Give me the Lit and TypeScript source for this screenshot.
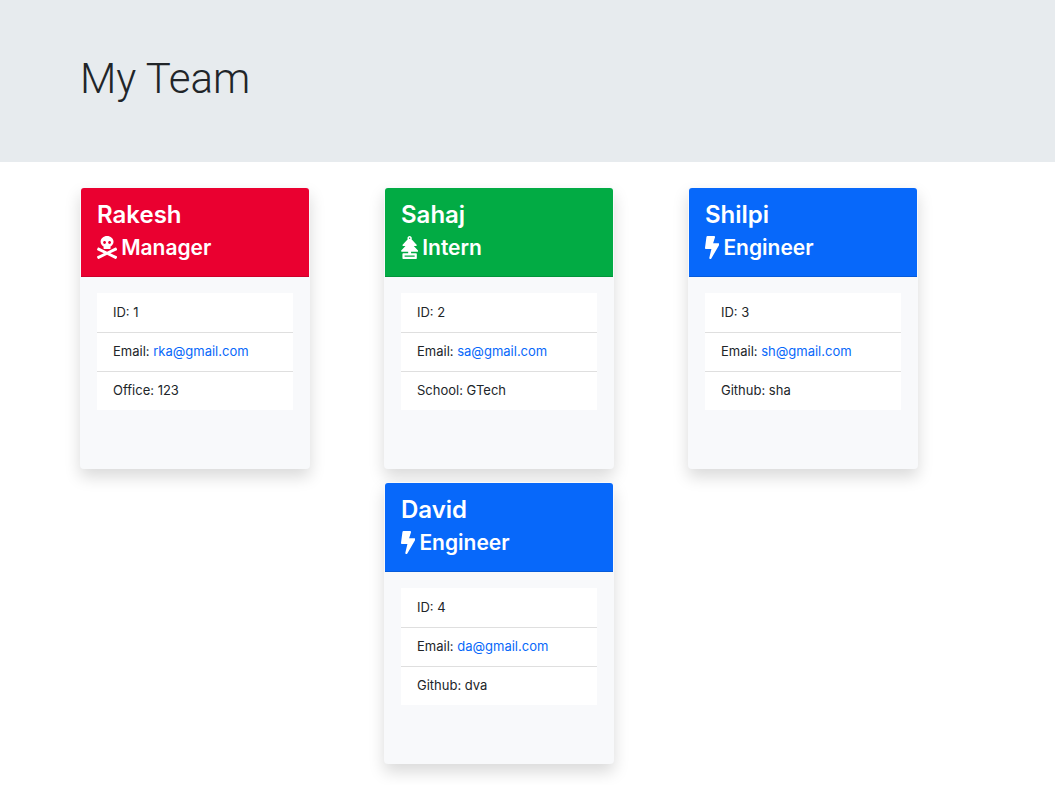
import { LitElement, html, css, svg } from "lit";
import { customElement, property } from "lit/decorators.js";

type Role = "Manager" | "Intern" | "Engineer";

interface Member {
  name: string;
  role: Role;
  id: number;
  email: string;
  extraLabel: string;
  extra: string;
}

const columns: Member[][] = [
  [{ name: "Rakesh", role: "Manager", id: 1, email: "rka@gmail.com", extraLabel: "Office", extra: "123" }],
  [
    { name: "Sahaj", role: "Intern", id: 2, email: "sa@gmail.com", extraLabel: "School", extra: "GTech" },
    { name: "David", role: "Engineer", id: 4, email: "da@gmail.com", extraLabel: "Github", extra: "dva" },
  ],
  [{ name: "Shilpi", role: "Engineer", id: 3, email: "sh@gmail.com", extraLabel: "Github", extra: "sha" }],
];

const icons = {
  Manager: {
    box: "0 0 448 512",
    shape: svg`<path d="M439.15 453.06L297.17 384l141.99-69.06c7.9-3.95 11.11-13.56 7.15-21.46L432 264.85c-3.95-7.9-13.56-11.11-21.47-7.16L224 348.41 37.47 257.69c-7.9-3.95-17.51-.75-21.47 7.16L1.69 293.48c-3.95 7.9-.75 17.51 7.15 21.46L150.83 384 8.85 453.06c-7.9 3.95-11.11 13.56-7.15 21.47l14.31 28.63c3.95 7.9 13.56 11.11 21.47 7.15L224 419.59l186.53 90.72c7.9 3.95 17.51.75 21.47-7.15l14.31-28.63c3.95-7.91.74-17.52-7.16-21.47zM150 237.28l-5.48 25.87c-2.67 12.62 5.42 24.85 16.45 24.85h126.08c11.03 0 19.12-12.23 16.45-24.85l-5.5-25.87c41.78-22.41 70-62.75 70-109.28C368 57.31 303.53 0 224 0S80 57.31 80 128c0 46.53 28.22 86.87 70 109.28zM280 112c17.65 0 32 14.35 32 32s-14.35 32-32 32-32-14.35-32-32 14.35-32 32-32zm-112 0c17.65 0 32 14.35 32 32s-14.35 32-32 32-32-14.35-32-32 14.35-32 32-32z"/>`,
  },
  Intern: {
    box: "0 0 384 512",
    shape: svg`<path d="M378.94 321.41L284.7 224h49.22c15.3 0 23.66-16.6 13.86-27.53L234.45 69.96c3.43-6.61 5.55-14 5.55-21.96 0-26.51-21.49-48-48-48s-48 21.49-48 48c0 7.96 2.12 15.35 5.55 21.96L36.22 196.47C26.42 207.4 34.78 224 50.08 224H99.3L5.06 321.41C-6.69 333.56 3.34 352 21.7 352H160v32H48c-8.84 0-16 7.16-16 16v96c0 8.84 7.16 16 16 16h288c8.84 0 16-7.16 16-16v-96c0-8.84-7.16-16-16-16H224v-32h138.3c18.36 0 28.39-18.44 16.64-30.59zM192 31.98c8.85 0 16.02 7.17 16.02 16.02 0 8.84-7.17 16.02-16.02 16.02S175.98 56.84 175.98 48c0-8.85 7.17-16.02 16.02-16.02zM304 432v32H80v-32h224z"/>`,
  },
  Engineer: {
    box: "0 0 320 512",
    shape: svg`<path d="M296 160H180.6l42.6-129.8C227.2 15 215.7 0 200 0H56C44 0 33.8 8.9 32.2 20.8l-32 240C-1.7 275.2 9.5 288 24 288h118.7L96.6 482.5c-3.6 15.2 8 29.5 23.3 29.5 8.4 0 16.4-4.4 20.8-12l176-304c9.3-15.9-2.2-36-20.7-36z"/>`,
  },
};

@customElement("team-card")
export class TeamCard extends LitElement {
  @property({ attribute: false }) member!: Member;

  static styles = css`
    :host {
      display: block;
    }
    .card {
      box-sizing: border-box;
      width: 230px;
      max-width: 100%;
      min-height: 282px;
      border: 1px solid transparent;
      border-radius: 4px;
      background: #f8f9fb;
      box-shadow: 0 8px 16px rgba(0, 0, 0, 0.15);
      overflow-wrap: anywhere;
    }
    .head {
      display: grid;
      gap: 4px;
      padding: 11px 16px 15px;
      border-bottom: 1px solid rgba(0, 0, 0, 0.125);
      border-radius: 3px 3px 0 0;
      color: #fff;
    }
    .manager {
      background: #ea0030;
    }
    .intern {
      background: #02ab44;
    }
    .engineer {
      background: #0768fa;
    }
    .name,
    .role {
      margin: 0;
      font-weight: 600;
    }
    .name {
      font-size: 24px;
      line-height: 31px;
    }
    .role {
      display: flex;
      align-items: center;
      gap: 4px;
      font-size: 21px;
      line-height: 27px;
    }
    .icon {
      height: 23px;
      fill: currentColor;
    }
    .list {
      margin: 16px;
      padding: 0;
      list-style: none;
      background: #fff;
    }
    .item {
      padding: 8px 16px 10px;
      border-top: 1px solid #dfdfdf;
      line-height: 20px;
    }
    .item:first-child {
      border-top-color: transparent;
    }
    .link {
      color: #0768fa;
      text-decoration: none;
    }
    .link:hover {
      text-decoration: underline;
    }
  `;

  render() {
    const m = this.member;
    const icon = icons[m.role];
    return html`
      <article class="card">
        <header class="head ${m.role.toLowerCase()}">
          <h2 class="name">${m.name}</h2>
          <h3 class="role">
            <svg class="icon" viewBox=${icon.box} aria-hidden="true">${icon.shape}</svg>
            <span>${m.role}</span>
          </h3>
        </header>
        <ul class="list">
          <li class="item">ID: ${m.id}</li>
          <li class="item">Email: <a class="link" href="mailto:${m.email}">${m.email}</a></li>
          <li class="item">${m.extraLabel}: ${m.extra}</li>
        </ul>
      </article>
    `;
  }
}

@customElement("app-root")
export class AppRoot extends LitElement {
  static styles = css`
    :host {
      display: block;
      min-height: 100vh;
      background: #fff;
      color: #212529;
      font-family: Inter, "Liberation Sans", sans-serif;
      font-size: 13px;
    }
    .hero {
      padding: 52px 80px 56px;
      background: #e7ebee;
    }
    .title {
      margin: 0;
      font-family: Roboto, Inter, sans-serif;
      font-size: 42px;
      font-weight: 300;
      line-height: 54px;
    }
    .team {
      display: grid;
      grid-template-columns: repeat(3, 1fr);
      padding: 25px 63px 21px 80px;
    }
    .column {
      display: flex;
      flex-direction: column;
      gap: 13px;
    }
  `;

  render() {
    return html`
      <header class="hero"><h1 class="title">My Team</h1></header>
      <main class="team">
        ${columns.map(
          (members) => html`<div class="column">${members.map((m) => html`<team-card .member=${m}></team-card>`)}</div>`,
        )}
      </main>
    `;
  }
}
